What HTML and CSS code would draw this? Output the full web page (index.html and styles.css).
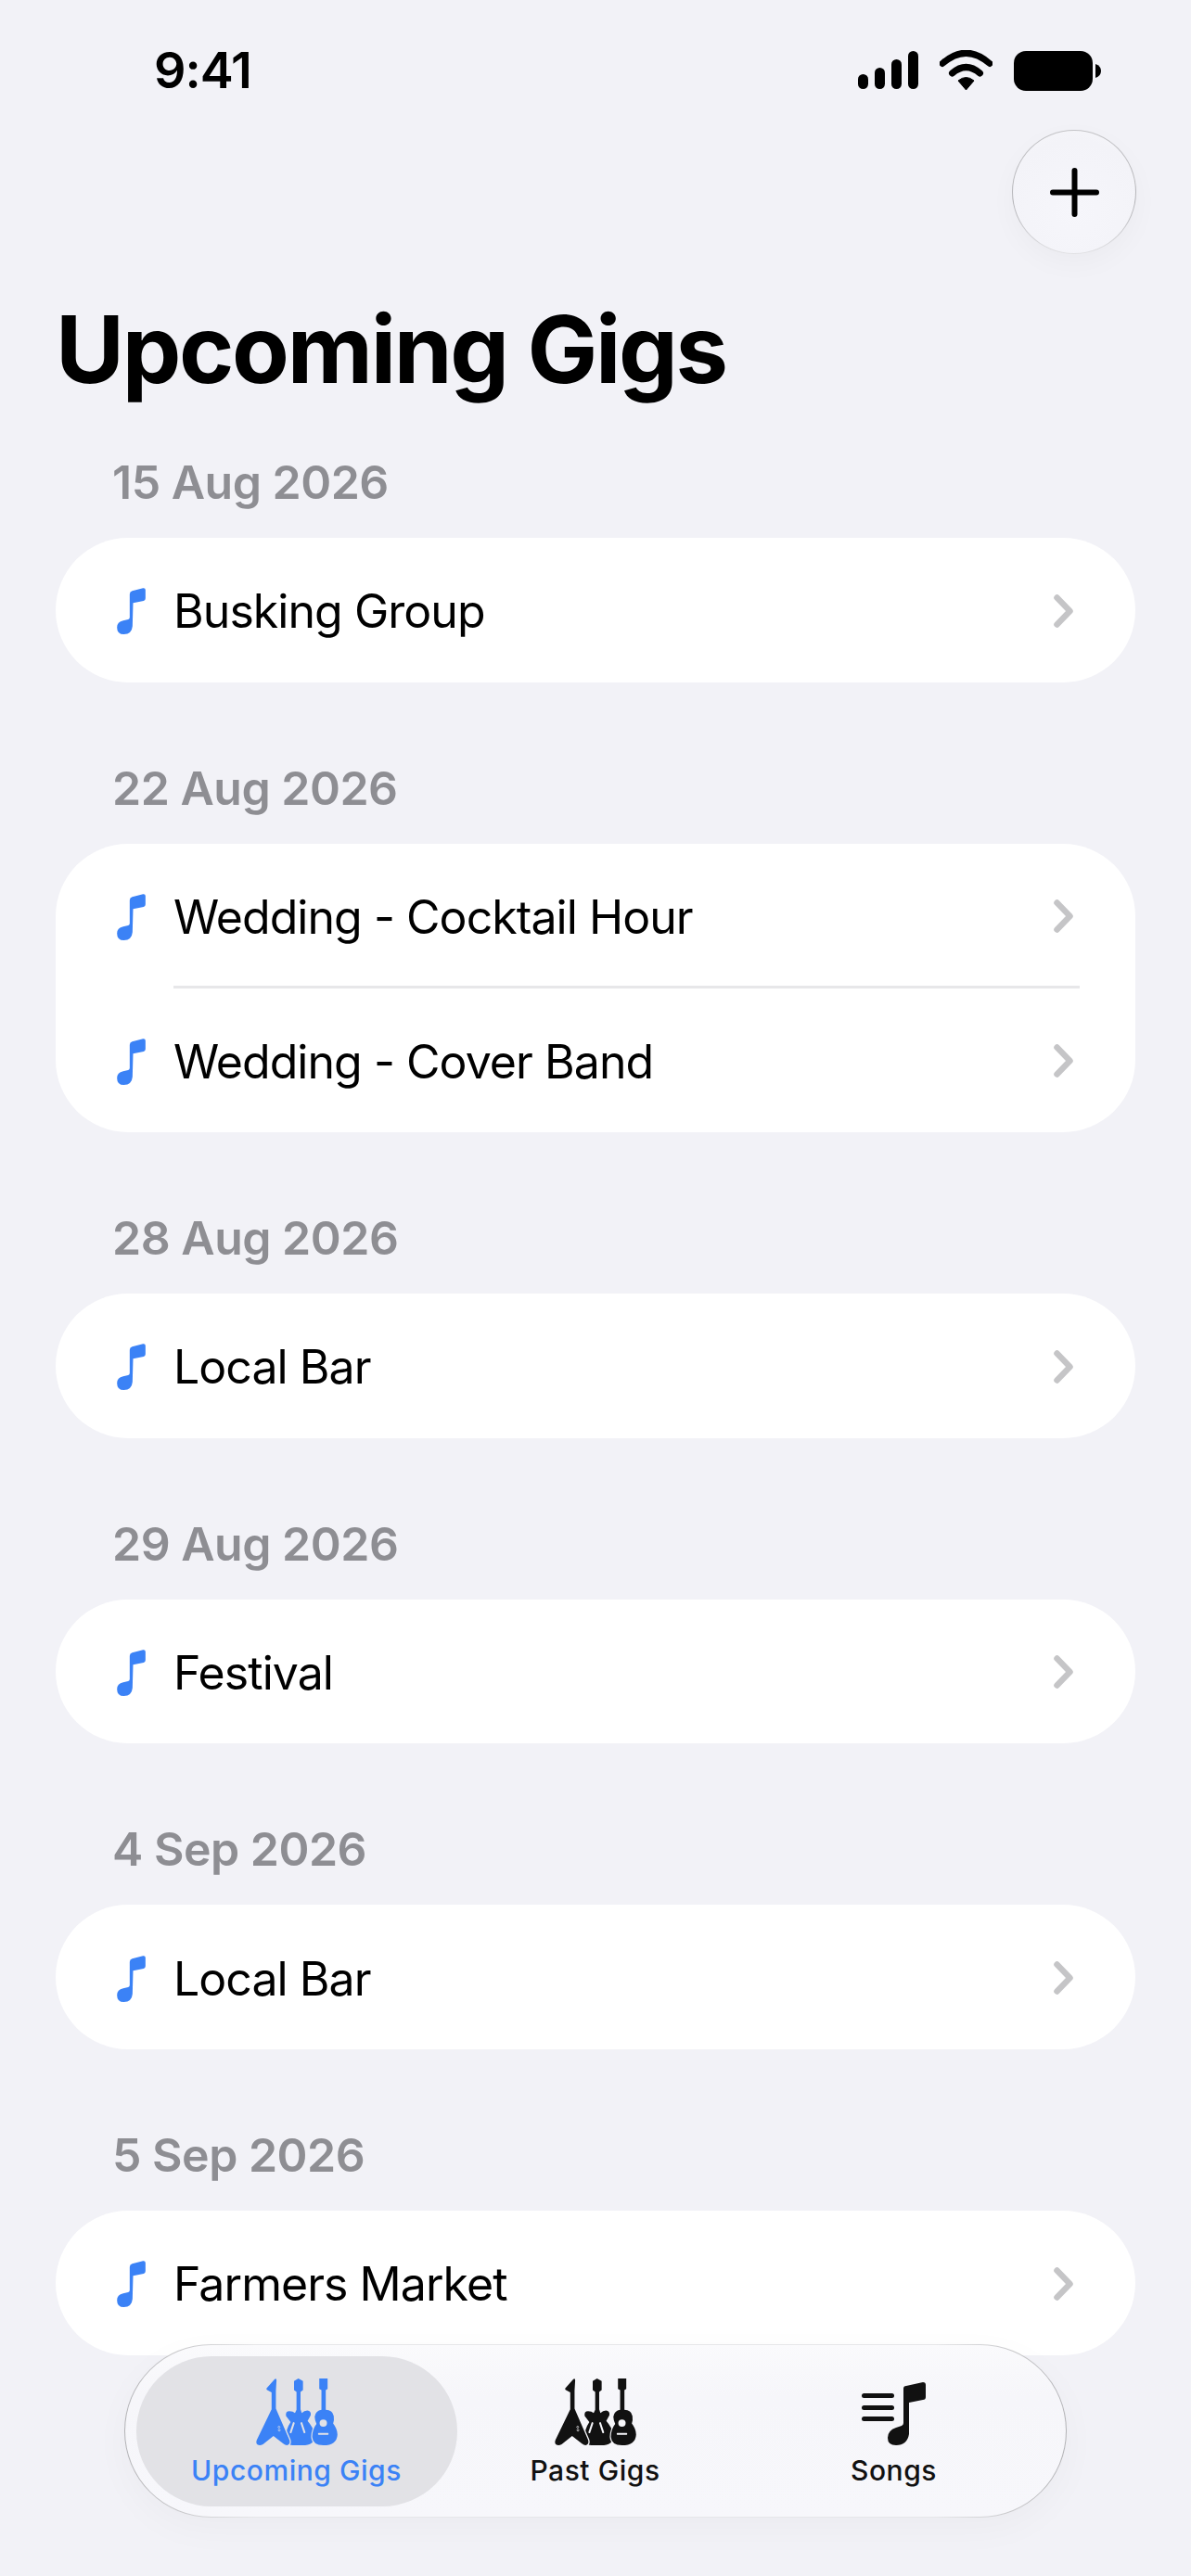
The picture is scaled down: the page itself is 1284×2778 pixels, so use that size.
FILE: index.html
```html
<!DOCTYPE html>
<html lang="en">
<head>
<meta charset="utf-8">
<title>Upcoming Gigs</title>
<link rel="stylesheet" href="styles.css">
</head>
<body>
<svg class="defs" width="0" height="0" aria-hidden="true">
  <symbol id="note" viewBox="0 0 92 150">
    <path d="M41 20Q41 12 49 10L84 1Q92 0 92 7V34Q92 40 86 42L52 49L50 124Q48 150 22 150Q0 150 0 128Q0 110 20 106L36 102Q41 101 41 95Z"/>
  </symbol>
  <symbol id="chev" viewBox="0 0 21 36">
    <path d="M3.5 3.5L17.500 18L3.500 32.500" fill="none" stroke="currentColor" stroke-width="6.500" stroke-linecap="round" stroke-linejoin="round"/>
  </symbol>
  <mask id="detail-cut" maskUnits="userSpaceOnUse" x="-5" y="-5" width="274" height="227">
    <rect x="-5" y="-5" width="274" height="227" fill="#fff"/>
    <circle cx="218" cy="145" r="12" fill="#000"/>
    <rect x="201" y="177" width="34" height="6" rx="2" fill="#000"/>
    <circle cx="74" cy="158" r="3" fill="none" stroke="#000" stroke-width="2"/>
    <circle cx="75" cy="168" r="3" fill="none" stroke="#000" stroke-width="2"/>
  </mask>
  <mask id="mid-cut" maskUnits="userSpaceOnUse" x="-5" y="-5" width="274" height="227">
    <rect x="-5" y="-5" width="274" height="227" fill="#fff"/>
    <path d="M122 145L112 175M147 145L157 175" stroke="#000" stroke-width="6" stroke-linecap="round"/>
    <path d="M64 98L108 200Q112 214 100 217H50V98Z" fill="#000" stroke="#000" stroke-width="8" stroke-linejoin="round"/>
    <path d="M212 102Q194 104 190 124Q190 132 196 148Q182 166 182 190Q184 217 218 217H240V102Z" fill="#000" stroke="#000" stroke-width="7" stroke-linejoin="round"/>
  </mask>
  <symbol id="guitars" viewBox="0 0 264 217">
    <path mask="url(#detail-cut)" d="M34 32L60 2Q66 -2 66 6L64 40V98L108 200Q112 214 100 217Q94 217 88 212L56 187L22 214Q12 219 4 215Q-2 210 2 200L50 100V45L36 38Q32 35 34 32Z"/>
    <path mask="url(#mid-cut)" d="M123 8L137 0L152 8V38L144 44V100L148 112Q156 104 166 104Q180 106 177 120L167 138Q186 160 192 185Q190 217 150 217H118Q100 217 96 195Q96 165 112 142L97 122Q94 106 108 106Q120 106 126 112L131 102V44L123 38Z"/>
    <path mask="url(#detail-cut)" d="M205 0H232V34L226 38V102Q248 102 252 122Q254 136 250 146Q264 164 264 182Q262 217 218 217Q184 217 182 190Q182 166 196 148Q190 132 190 124Q194 104 212 102V38L205 34Z"/>
  </symbol>
  <symbol id="songs" viewBox="0 0 69 68">
    <rect x="0" y="12" width="35" height="5" rx="2.500"/>
    <rect x="0" y="25" width="35" height="5" rx="2.500"/>
    <rect x="0" y="37" width="35" height="5" rx="2.500"/>
    <path d="M45 7Q45 4 48 4L66 0Q69 0 69 3V16Q69 19 66 19L51 22V56Q49 68 37 68Q28 68 28 60Q28 52 37 49L43 47Q45 46 45 44Z"/>
  </symbol>
</svg>
<main class="page">
  <header class="status">
    <span class="time">9:41</span>
    <div class="status-icons">
      <svg class="sig" viewBox="0 0 65 41"><rect x="0" y="25" width="11" height="16" rx="5.500"/><rect x="18" y="18" width="11" height="23" rx="5.500"/><rect x="36" y="9" width="11" height="32" rx="5.500"/><rect x="54" y="0" width="11" height="41" rx="5.500"/></svg>
      <svg class="wifi" viewBox="0 0 57 43"><path d="M3 14.500Q28.500 -8 54 14.500" fill="none" stroke="#000" stroke-width="7" stroke-linecap="round"/><path d="M13.500 25Q28.500 12 43.500 25" fill="none" stroke="#000" stroke-width="7" stroke-linecap="round"/><path d="M20 33Q28.500 26 37 33L28.500 43Z" stroke="#000" stroke-width="1" stroke-linejoin="round"/></svg>
      <svg class="batt" viewBox="0 0 94 43"><rect x="0" y="0" width="85" height="43" rx="13"/><path d="M88 14Q94 16 94 21.500Q94 27 88 29Z"/></svg>
    </div>
  </header>
  <div class="toolbar">
    <button class="add" aria-label="Add"><svg viewBox="0 0 53 53"><path d="M26.500 3V50M3 26.500H50" stroke="#000" stroke-width="6" stroke-linecap="round"/></svg></button>
  </div>
  <h1 class="title">Upcoming Gigs</h1>
  <div class="list">
    <section>
      <h2 class="date">15 Aug 2026</h2>
      <div class="card">
        <a class="row"><svg class="note"><use href="#note"/></svg><span class="name">Busking Group</span><svg class="chev"><use href="#chev"/></svg></a>
      </div>
    </section>
    <section>
      <h2 class="date">22 Aug 2026</h2>
      <div class="card">
        <a class="row"><svg class="note"><use href="#note"/></svg><span class="name">Wedding - Cocktail Hour</span><svg class="chev"><use href="#chev"/></svg></a>
        <a class="row"><svg class="note"><use href="#note"/></svg><span class="name">Wedding - Cover Band</span><svg class="chev"><use href="#chev"/></svg></a>
      </div>
    </section>
    <section>
      <h2 class="date">28 Aug 2026</h2>
      <div class="card">
        <a class="row"><svg class="note"><use href="#note"/></svg><span class="name">Local Bar</span><svg class="chev"><use href="#chev"/></svg></a>
      </div>
    </section>
    <section>
      <h2 class="date">29 Aug 2026</h2>
      <div class="card">
        <a class="row"><svg class="note"><use href="#note"/></svg><span class="name">Festival</span><svg class="chev"><use href="#chev"/></svg></a>
      </div>
    </section>
    <section>
      <h2 class="date">4 Sep 2026</h2>
      <div class="card">
        <a class="row"><svg class="note"><use href="#note"/></svg><span class="name">Local Bar</span><svg class="chev"><use href="#chev"/></svg></a>
      </div>
    </section>
    <section>
      <h2 class="date">5 Sep 2026</h2>
      <div class="card">
        <a class="row"><svg class="note"><use href="#note"/></svg><span class="name">Farmers Market</span><svg class="chev"><use href="#chev"/></svg></a>
      </div>
    </section>
  </div>
  <nav class="tabbar">
    <a class="tab active"><svg class="guitars"><use href="#guitars"/></svg><span>Upcoming Gigs</span></a>
    <a class="tab"><svg class="guitars"><use href="#guitars"/></svg><span>Past Gigs</span></a>
    <a class="tab"><svg class="songs"><use href="#songs"/></svg><span>Songs</span></a>
  </nav>
</main>
</body>
</html>
```
FILE: styles.css
```css
* { box-sizing: border-box; }
html, body { margin: 0; padding: 0; }
body { background: #f2f2f7; font-family: Inter, "Liberation Sans", sans-serif; color: #000; overflow: hidden; }
.defs { position: absolute; }
.page { position: relative; width: 1284px; height: 2778px; overflow: hidden; background: #f2f2f7; }

.status { height: 140px; display: flex; justify-content: space-between; align-items: flex-start; padding: 54px 97px 0 166px; }
.time { font-size: 54px; font-weight: 600; line-height: 44px; letter-spacing: -1px; }
.status-icons { display: flex; align-items: flex-start; }
.sig { width: 65px; height: 41px; margin-top: 1px; margin-right: 23px; }
.wifi { width: 57px; height: 43px; margin-right: 23px; }
.batt { width: 94px; height: 43px; margin-top: 1px; }

.toolbar { display: flex; justify-content: flex-end; padding-right: 59px; }
.add { width: 134px; height: 134px; border-radius: 50%; padding: 0; display: flex; align-items: center; justify-content: center; border: 1.500px solid transparent;
  background: radial-gradient(circle at 50% 65%, #f6f6fb 0%, #f3f3f8 70%, #f8f8fb 100%) padding-box, linear-gradient(180deg, #c4c4c7 0%, #b4b4b8 60%, #e2e2e5 100%) border-box;
  box-shadow: 0 10px 30px rgba(0, 0, 0, .03); }
.add svg { width: 53px; height: 53px; }

.title { margin: 46px 0 0; padding-left: 60px; font-size: 101px; line-height: 112px; font-weight: 700; letter-spacing: -2.300px; }

.list { margin-top: 68px; display: flex; flex-direction: column; gap: 94px; }
.date { margin: 0 0 40px; padding-left: 121px; font-size: 50px; line-height: 40px; font-weight: 600; color: #8e8e93; letter-spacing: -.5px; }
.card { margin: 0 60px; background: #fff; border-radius: 78px; }
.row { position: relative; height: 155.670px; display: flex; align-items: center; padding: 0 67px 0 66px; }
.row + .row::before { content: ""; position: absolute; left: 127px; right: 0; top: -2px; height: 2.500px; background: #e7e7e9; margin-right: 60px; }
.note { width: 31px; height: 50px; fill: #3b82f6; flex: none; margin-right: 30px; margin-top: 3px; }
.name { flex: 1; font-size: 50px; line-height: 60px; font-weight: 400; letter-spacing: -.95px; padding-top: 3px; }
.chev { width: 21px; height: 36px; color: #c5c5c7; flex: none; margin-top: 2px; }

.tabbar { position: absolute; left: 134px; top: 2528px; width: 1016px; height: 187px; display: flex; padding: 0 23.500px; border-radius: 94px; border: 1.500px solid transparent;
  background: linear-gradient(180deg, #fafafc 0%, #f6f6fa 30%, #f7f7fb 100%) padding-box, linear-gradient(90deg, #b2b2b5 0%, #e7e7e9 14%, #e7e7e9 86%, #b2b2b5 100%) border-box;
  box-shadow: 0 12px 40px rgba(0, 0, 0, .03); }
.tab { position: relative; width: 322px; display: flex; flex-direction: column; align-items: center; padding-top: 35.500px; color: #111; font-size: 30px; line-height: 36px; font-weight: 500; letter-spacing: .55px; }
.tab.active { color: #3b82f6; }
.tab.active::before { content: ""; position: absolute; z-index: 0; left: -12px; right: -12px; top: 11.500px; height: 162px; border-radius: 81px; background: #e2e2e6; }
.tab svg, .tab span { position: relative; z-index: 1; }
.tab svg { fill: currentColor; }
.guitars { width: 88px; height: 72px; margin-bottom: 9px; }
.songs { width: 69px; height: 68px; margin-bottom: 9px; margin-top: 4px; }
```
